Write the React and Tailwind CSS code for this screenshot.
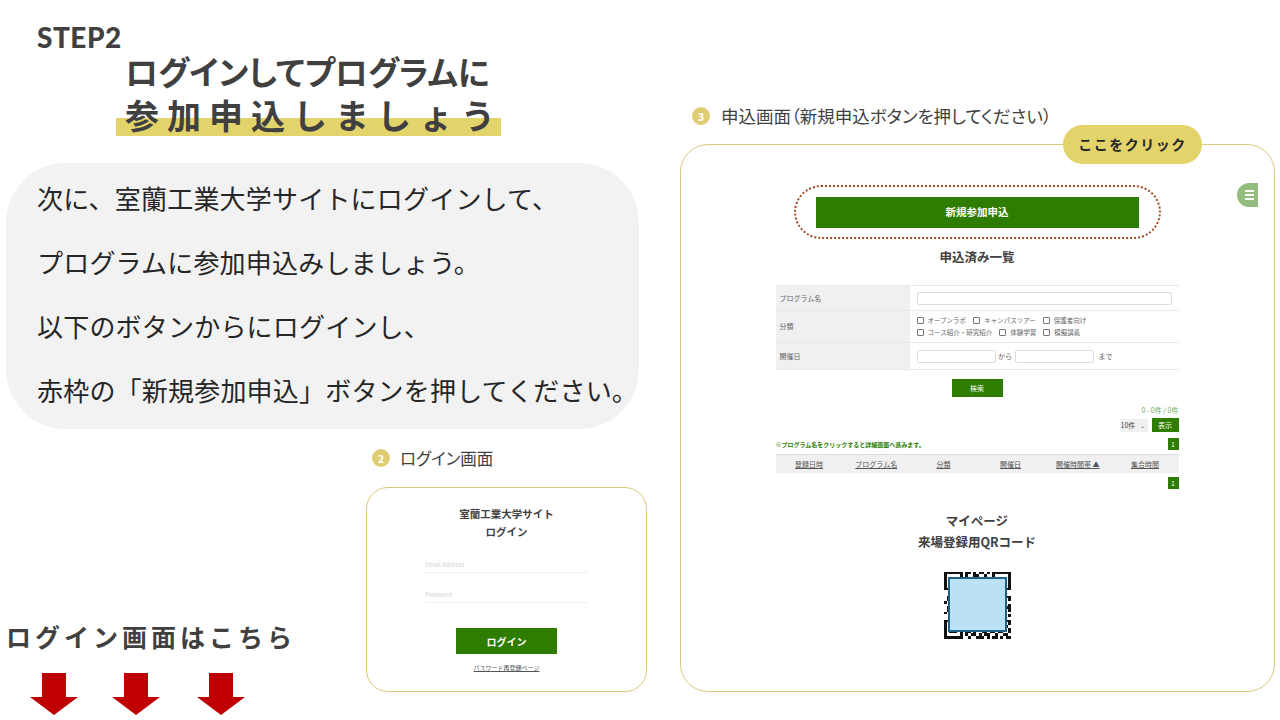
const categories = [
  ['オープンラボ', 'キャンパスツアー', '保護者向け'],
  ['コース紹介・研究紹介', '体験学習', '模擬講義'],
];
const headers = ['登録日時', 'プログラム名', '分類', '開催日', '開催時間帯 ▲', '集合時間'];

// corner squares of the code, the rest comes from a fixed bit pattern
const qrBits = [
  '1111111011010110101111111',
  '1000001010011001001000001',
  '1011101001101011101011101',
  '1011101011000110001011101',
  '1011101000110101001011101',
  '1000001010101010101000001',
  '1111111010101010101111111',
  '0000000011001001000000000',
  '0011011100110011010010100',
  '0110100011010110101101011',
  '0101011001101001011010001',
  '1001101101001110010110100',
  '0010010110110001101001101',
  '0110110011001011010110011',
  '0101101001110100110011001',
  '1000100110011010101100100',
  '0011011010101101011111001',
  '0000000010110011010001100',
  '1111111001011010110101011',
  '1000001011100101010001101',
  '1011101010011010111111010',
  '1011101001101100100110101',
  '1011101011010011011011001',
  '1000001010110101100100110',
  '1111111001001110101101011',
];

function QrCode() {
  return (
    <div className="relative w-[67px] h-[68px]">
      <svg viewBox="0 0 25 25" width="67" height="68" shapeRendering="crispEdges">
        {qrBits.map((row, y) =>
          row.split('').map((bit, x) =>
            bit === '1' ? <rect key={`${x}-${y}`} x={x} y={y} width="1" height="1" fill="#111" /> : null
          )
        )}
      </svg>
      <div className="absolute left-[4px] top-[6px] w-[59px] h-[55px] bg-[#bde1f4] border-2 border-[#1f6288]"></div>
    </div>
  );
}

function DownArrow() {
  return (
    <svg width="48" height="42" viewBox="0 0 48 42">
      <path d="M12 0H36V24H48L24 42L0 24H12Z" fill="#c00000" />
    </svg>
  );
}

function StepLabel({ num, children }) {
  return (
    <div className="flex items-center h-6 text-[#404040] [font-feature-settings:'palt']">
      <span className="flex items-center justify-center w-[18px] h-[18px] rounded-full bg-[#e0cd72] text-white text-[11px] font-bold">{num}</span>
      {children}
    </div>
  );
}

function LoginField({ label }) {
  return (
    <div className="h-[30px] w-[163px] flex items-end pb-[3px] border-b border-[#f0f0f0] text-[6px] text-[#d4d4d4]">{label}</div>
  );
}

function LoginCard() {
  return (
    <div className="w-[281px] h-[205px] rounded-[22px] border border-[#dcc97a] bg-white flex flex-col items-center pt-[17px] text-[#404040]">
      <div className="h-[18px] leading-[18px] text-[10.5px] font-bold">室蘭工業大学サイト</div>
      <div className="h-[18px] leading-[18px] text-[10.5px] font-bold">ログイン</div>
      <div className="mt-[2px]"><LoginField label="Email Address" /></div>
      <LoginField label="Password" />
      <div className="mt-[25px] w-[101px] h-[26px] flex items-center justify-center bg-[#2e7d00] text-white text-[10px] font-bold">ログイン</div>
      <div className="mt-[9px] text-[6px] leading-[10px] underline text-[#555]">パスワード再登録ページ</div>
    </div>
  );
}

function SearchForm() {
  return (
    <div className="w-[403px] text-[7px] text-[#666]">
      <div className="flex h-[26px] border-t border-b border-[#e8e8e8]">
        <div className="w-[134px] bg-[#f0f0f0] flex items-center pl-1">プログラム名</div>
        <div className="flex-1 flex items-center pl-[7px]">
          <div className="w-[255px] h-[13px] rounded-[2px] border border-[#ddd]"></div>
        </div>
      </div>
      <div className="flex h-[32px] border-b border-[#e8e8e8]">
        <div className="w-[134px] bg-[#f0f0f0] flex items-center pl-1">分類</div>
        <div className="flex-1 flex flex-col justify-center pl-[7px] gap-[1px]">
          {categories.map((row) => (
            <div key={row[0]} className="flex h-[11px] items-center gap-[7px]">
              {row.map((c) => (
                <div key={c} className="flex items-center gap-[4px]">
                  <span className="w-[7px] h-[7px] border border-[#777] rounded-[1px]"></span>
                  <span className="text-[6.5px]">{c}</span>
                </div>
              ))}
            </div>
          ))}
        </div>
      </div>
      <div className="flex h-[27px] border-b border-[#e8e8e8]">
        <div className="w-[134px] bg-[#f0f0f0] flex items-center pl-1">開催日</div>
        <div className="flex-1 flex items-center pl-[7px]">
          <div className="w-[79px] h-[13px] rounded-[2px] border border-[#ddd]"></div>
          <span className="w-[19px] text-center">から</span>
          <div className="w-[79px] h-[13px] rounded-[2px] border border-[#ddd]"></div>
          <span className="ml-[5px]">まで</span>
        </div>
      </div>
      <div className="flex justify-center mt-[9px]">
        <div className="w-[51px] h-[18px] flex items-center justify-center bg-[#2e7d00] text-white">検索</div>
      </div>
      <div className="text-right text-[#6aa84f] mt-[8px] h-[10px] leading-[10px]">0 - 0件 / 0件</div>
      <div className="flex justify-end items-center mt-[3px] h-[14px]">
        <div className="w-[28px] h-[13px] bg-[#f0f0f0] flex items-center justify-between px-[1px] text-[#444]">10件<span className="text-[6px] pr-[2px]">⌄</span></div>
        <div className="ml-[4px] w-[27px] h-[14px] flex items-center justify-center bg-[#2e7d00] text-white">表示</div>
      </div>
      <div className="flex justify-between items-center mt-[6px] h-[12px]">
        <span className="text-[#2e7d00] font-bold text-[6px]">※プログラム名をクリックすると詳細画面へ進みます。</span>
        <span className="w-[11px] h-[12px] flex items-center justify-center bg-[#2e7d00] text-white">1</span>
      </div>
      <div className="grid grid-cols-6 h-[19px] mt-[4px] bg-[#f0f0f0] border-t border-[#ddd] items-center text-center text-[#555] underline">
        {headers.map((h) => <span key={h}>{h}</span>)}
      </div>
      <div className="flex justify-end mt-[4px]">
        <span className="w-[11px] h-[12px] flex items-center justify-center bg-[#2e7d00] text-white">1</span>
      </div>
    </div>
  );
}

function ApplyCard() {
  return (
    <div className="relative w-[595px] h-[548px] rounded-[28px] border border-[#dcc97a] bg-white flex flex-col items-center pt-[40px] pr-[1px]">
      <div className="absolute -top-[20px] left-[382px] w-[139px] h-[39px] rounded-full bg-[#e3d36b] flex items-center justify-center text-[14px] font-bold tracking-[1.5px] text-[#262626]">ここをクリック</div>
      <div className="absolute left-[556px] top-[38px] w-[21px] h-[24px] rounded-l-full rounded-br-[10px] bg-[#93bd7e] flex flex-col items-center justify-center gap-[2px] pl-[4px]">
        <span className="w-[9px] h-[2px] bg-white"></span>
        <span className="w-[9px] h-[2px] bg-white"></span>
        <span className="w-[9px] h-[2px] bg-white"></span>
      </div>
      <div className="w-[367px] h-[54px] rounded-full border-2 border-dotted border-[#a5482a] flex items-center justify-center">
        <div className="w-[323px] h-[31px] bg-[#2e7d00] flex items-center justify-center text-white text-[10.5px] font-bold">新規参加申込</div>
      </div>
      <div className="mt-[8px] h-[20px] leading-[20px] text-[12.5px] font-bold text-[#404040]">申込済み一覧</div>
      <div className="mt-[18px]"><SearchForm /></div>
      <div className="mt-[21px] h-[21px] leading-[21px] text-[12.5px] font-bold text-[#404040]">マイページ</div>
      <div className="h-[21px] leading-[21px] text-[12.5px] font-bold text-[#404040]">来場登録用QRコード</div>
      <div className="mt-[19px]"><QrCode /></div>
    </div>
  );
}

export default function App() {
  return (
    <div className="w-[1280px] h-[720px] overflow-hidden bg-white flex font-['Noto_Sans_CJK_JP','Liberation_Sans',sans-serif] text-[#404040]">
      {/* left side */}
      <div className="w-[680px] shrink-0 flex flex-col">
        <div className="ml-[37px] mt-[20px] h-[34px] leading-[34px] text-[28px] font-black font-['Lato','Liberation_Sans',sans-serif] tracking-[0.5px]">STEP2</div>
        <div className="ml-[125px] -mt-[4px] h-[42px] leading-[42px] text-[32.7px] font-bold [font-feature-settings:'palt'] whitespace-nowrap">ログインしてプログラムに</div>
        <div className="relative ml-[116px] w-[385px] h-[45px]">
          <div className="absolute left-0 right-0 top-[26px] h-[18px] bg-[#e3d36b]"></div>
          <div className="relative pl-[9px] leading-[45px] text-[34px] font-bold tracking-[8px] whitespace-nowrap">参加申込しましょう</div>
        </div>
        <div className="ml-[6px] mt-[26px] w-[633px] h-[266px] rounded-[60px] bg-[#f2f2f2] pl-[31px] pt-[3px] text-[26px] tracking-[0.2px] text-[#262626] whitespace-nowrap">
          <div className="h-16 leading-[64px]">次に、室蘭工業大学サイトにログインして、</div>
          <div className="h-16 leading-[64px]">プログラムに参加申込みしましょう。</div>
          <div className="h-16 leading-[64px]">以下のボタンからにログインし、</div>
          <div className="h-16 leading-[64px]">赤枠の「新規参加申込」ボタンを押してください。</div>
        </div>
        <div className="flex flex-1">
          <div className="w-[366px] pt-[189px]">
            <div className="ml-[6px] h-9 leading-[36px] text-[25px] font-bold tracking-[4px] whitespace-nowrap">ログイン画面はこちら</div>
            <div className="flex ml-[30px] mt-[19px]">
              <DownArrow />
              <div className="ml-[34px]"><DownArrow /></div>
              <div className="ml-[37px]"><DownArrow /></div>
            </div>
          </div>
          <div className="pt-[17px]">
            <div className="ml-[6px] -mb-[1px]"><StepLabel num="2"><span className="ml-[10px] text-[16.5px]">ログイン画面</span></StepLabel></div>
            <div className="mt-[18px]"><LoginCard /></div>
          </div>
        </div>
      </div>

      {/* right side */}
      <div className="flex flex-col pt-[104px]">
        <div className="ml-[12px] h-6"><StepLabel num="3"><span className="ml-[11px] text-[17.5px]">申込画面（新規申込ボタンを押してください）</span></StepLabel></div>
        <div className="mt-[16px]"><ApplyCard /></div>
      </div>
    </div>
  );
}
